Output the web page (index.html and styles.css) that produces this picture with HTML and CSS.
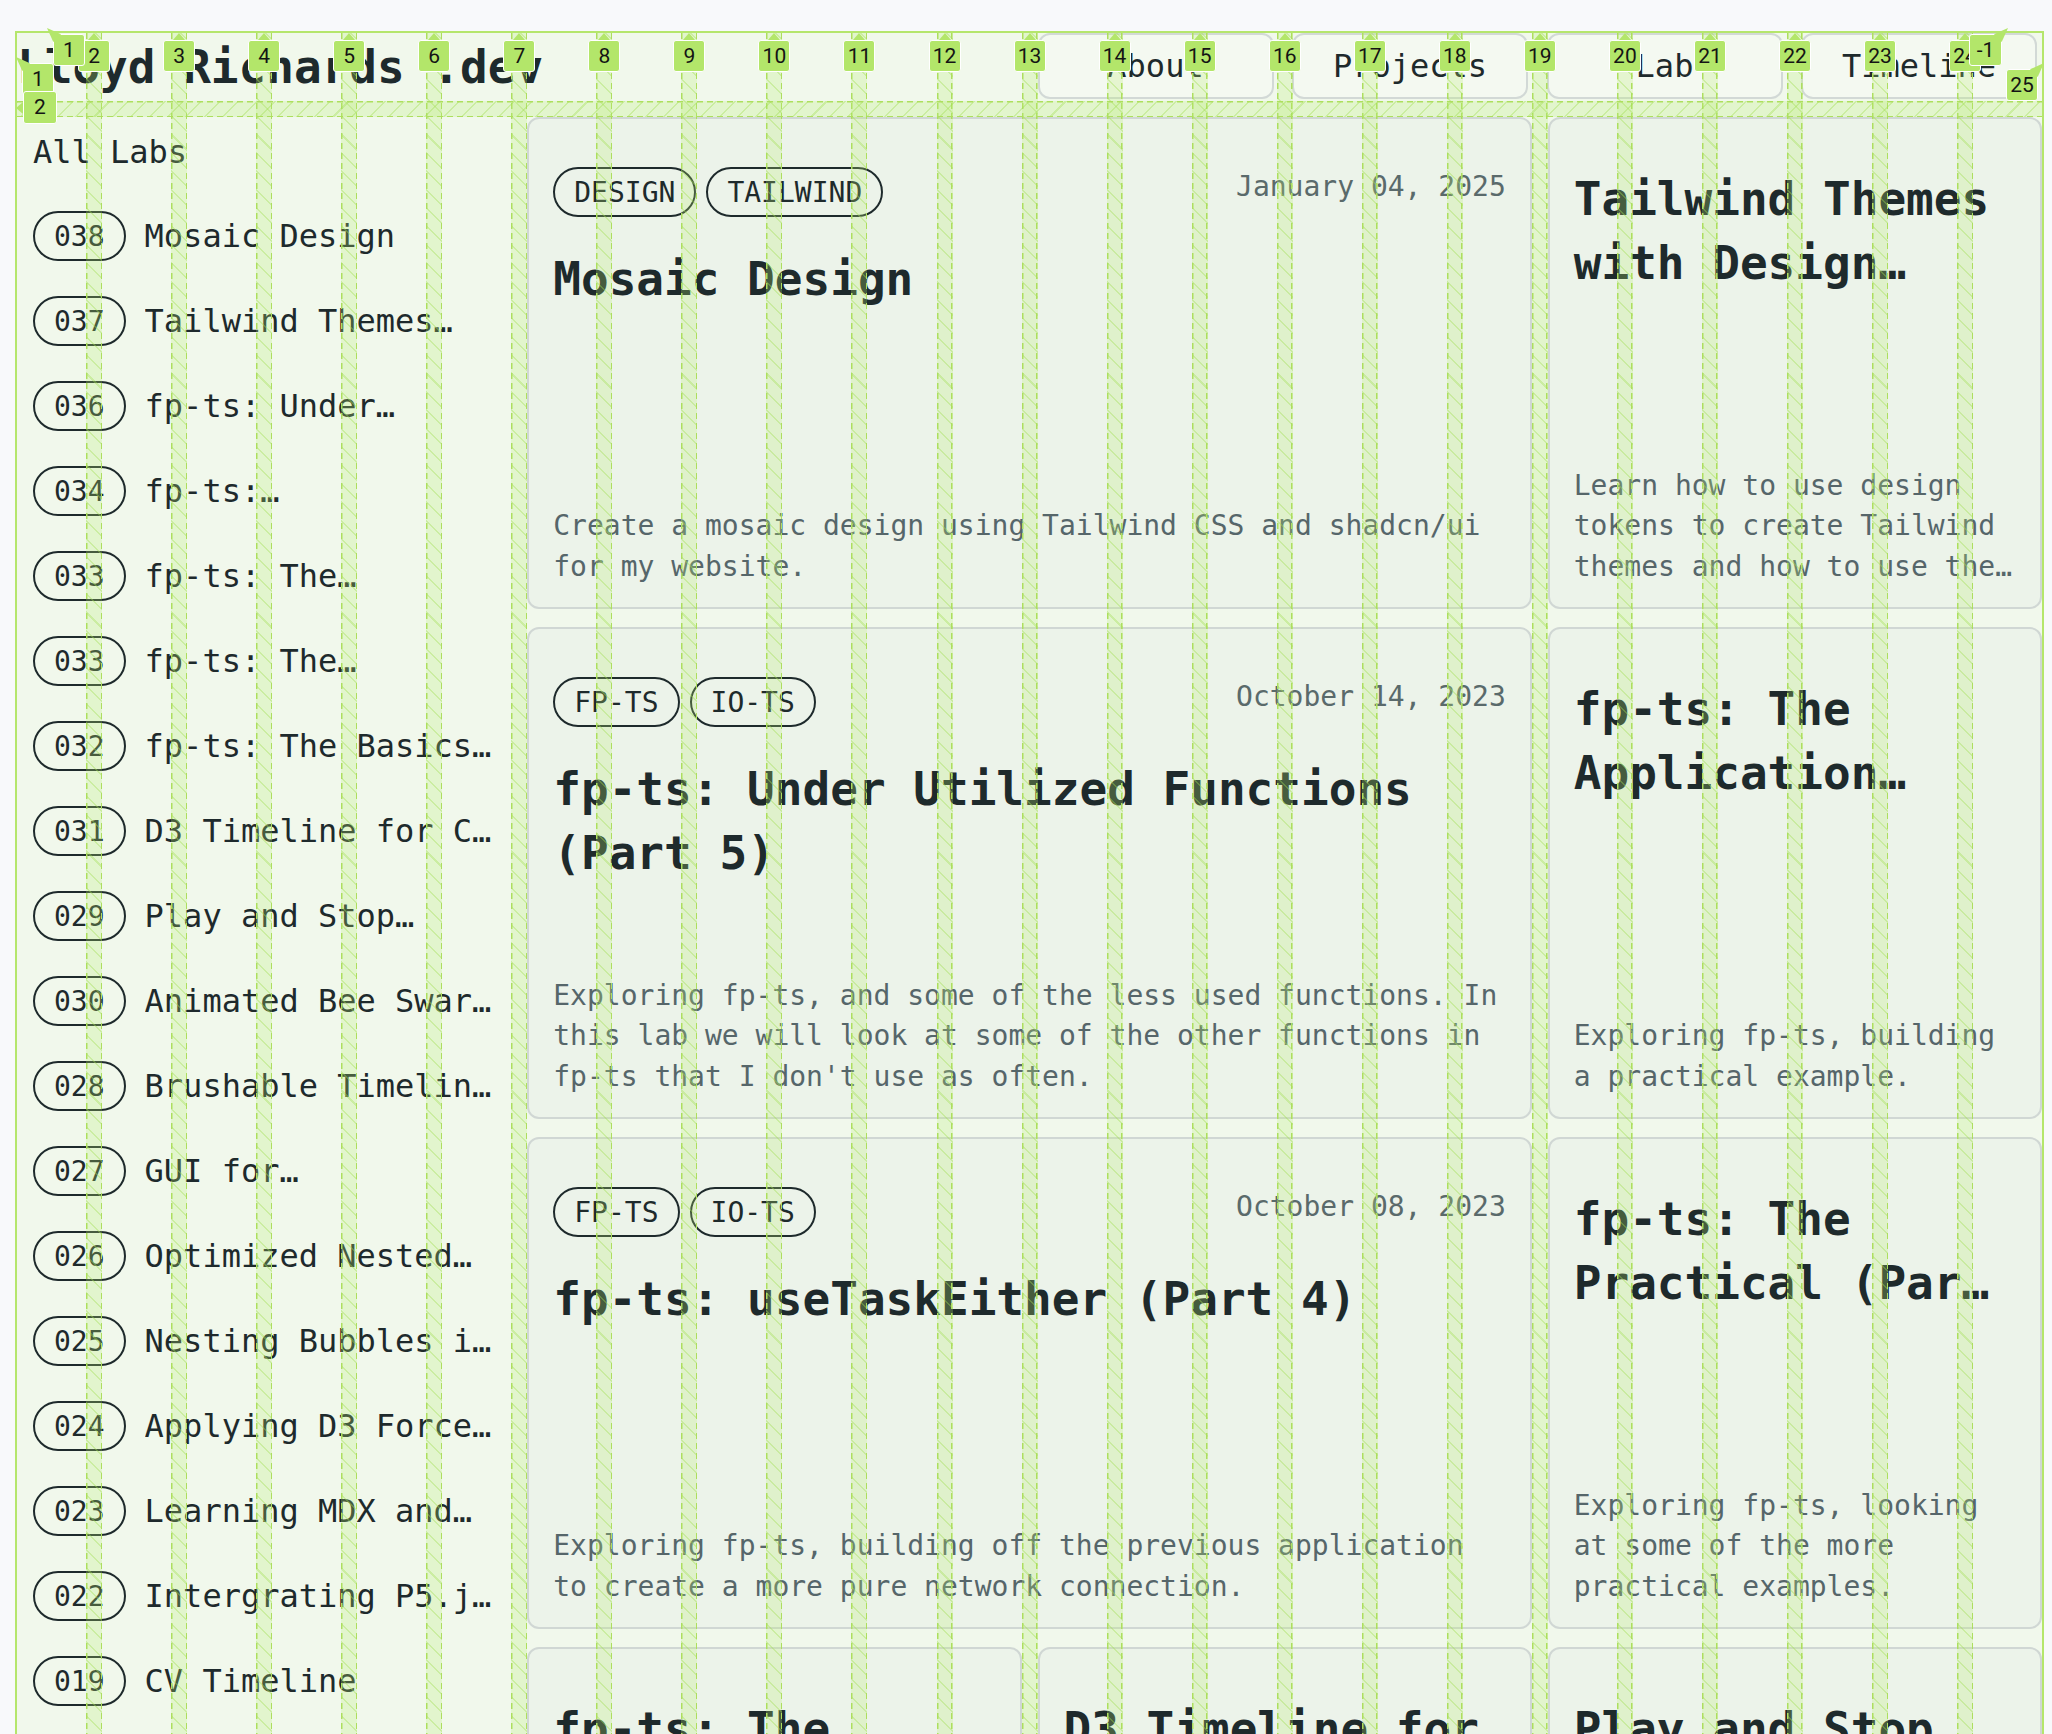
FILE: index.html
```html
<!DOCTYPE html>
<html lang="en">
<head>
<meta charset="utf-8">
<title>Lloyd Richards .dev — Lab</title>
<link rel="stylesheet" href="styles.css">
</head>
<body>
<div class="page">
  <div class="layout">
    <header class="site-header">
      <a class="brand" href="#">Lloyd Richards .dev</a>
      <nav class="nav">
        <a class="nav-link" href="#">About</a>
        <a class="nav-link" href="#">Projects</a>
        <a class="nav-link" href="#">Lab</a>
        <a class="nav-link" href="#">Timeline</a>
      </nav>
    </header>

    <aside class="sidebar">
      <h2 class="sidebar-title">All Labs</h2>
      <ul class="lab-list">
        <li class="lab-item"><span class="pill">038</span><span class="lab-name">Mosaic Design</span></li>
        <li class="lab-item"><span class="pill">037</span><span class="lab-name">Tailwind Themes…</span></li>
        <li class="lab-item"><span class="pill">036</span><span class="lab-name">fp-ts: Under…</span></li>
        <li class="lab-item"><span class="pill">034</span><span class="lab-name">fp-ts:…</span></li>
        <li class="lab-item"><span class="pill">033</span><span class="lab-name">fp-ts: The…</span></li>
        <li class="lab-item"><span class="pill">033</span><span class="lab-name">fp-ts: The…</span></li>
        <li class="lab-item"><span class="pill">032</span><span class="lab-name">fp-ts: The Basics…</span></li>
        <li class="lab-item"><span class="pill">031</span><span class="lab-name">D3 Timeline for C…</span></li>
        <li class="lab-item"><span class="pill">029</span><span class="lab-name">Play and Stop…</span></li>
        <li class="lab-item"><span class="pill">030</span><span class="lab-name">Animated Bee Swar…</span></li>
        <li class="lab-item"><span class="pill">028</span><span class="lab-name">Brushable Timelin…</span></li>
        <li class="lab-item"><span class="pill">027</span><span class="lab-name">GUI for…</span></li>
        <li class="lab-item"><span class="pill">026</span><span class="lab-name">Optimized Nested…</span></li>
        <li class="lab-item"><span class="pill">025</span><span class="lab-name">Nesting Bubbles i…</span></li>
        <li class="lab-item"><span class="pill">024</span><span class="lab-name">Applying D3 Force…</span></li>
        <li class="lab-item"><span class="pill">023</span><span class="lab-name">Learning MDX and…</span></li>
        <li class="lab-item"><span class="pill">022</span><span class="lab-name">Intergrating P5.j…</span></li>
        <li class="lab-item"><span class="pill">019</span><span class="lab-name">CV Timeline</span></li>
      </ul>
    </aside>

    <main class="cards">
      <article class="card card-wide">
        <div class="card-meta">
          <div class="tags"><span class="pill">DESIGN</span><span class="pill">TAILWIND</span></div>
          <span class="date">January 04, 2025</span>
        </div>
        <h3 class="card-title">Mosaic Design</h3>
        <p class="card-desc">Create a mosaic design using Tailwind CSS and shadcn/ui for my website.</p>
      </article>
      <article class="card">
        <h3 class="card-title">Tailwind Themes with Design…</h3>
        <p class="card-desc">Learn how to use design tokens to create Tailwind themes and how to use the…</p>
      </article>

      <article class="card card-wide">
        <div class="card-meta">
          <div class="tags"><span class="pill">FP-TS</span><span class="pill">IO-TS</span></div>
          <span class="date">October 14, 2023</span>
        </div>
        <h3 class="card-title">fp-ts: Under Utilized Functions (Part 5)</h3>
        <p class="card-desc">Exploring fp-ts, and some of the less used functions. In this lab we will look at some of the other functions in fp-ts that I don't use as often.</p>
      </article>
      <article class="card">
        <h3 class="card-title">fp-ts: The Application…</h3>
        <p class="card-desc">Exploring fp-ts, building a practical example.</p>
      </article>

      <article class="card card-wide">
        <div class="card-meta">
          <div class="tags"><span class="pill">FP-TS</span><span class="pill">IO-TS</span></div>
          <span class="date">October 08, 2023</span>
        </div>
        <h3 class="card-title">fp-ts: useTaskEither (Part 4)</h3>
        <p class="card-desc">Exploring fp-ts, building off the previous application to create a more pure network connection.</p>
      </article>
      <article class="card">
        <h3 class="card-title">fp-ts: The Practical (Par…</h3>
        <p class="card-desc">Exploring fp-ts, looking at some of the more practical examples.</p>
      </article>

      <article class="card">
        <h3 class="card-title">fp-ts: The Basics…</h3>
        <p class="card-desc">Exploring fp-ts, starting with the basics.</p>
      </article>
      <article class="card">
        <h3 class="card-title">D3 Timeline for Canvas</h3>
        <p class="card-desc">Building a timeline with D3 and canvas.</p>
      </article>
      <article class="card">
        <h3 class="card-title">Play and Stop Animations</h3>
        <p class="card-desc">Controlling animations with play and stop.</p>
      </article>
    </main>

    <div class="grid-overlay" aria-hidden="true">
      <div class="ov-track"></div>
      <div class="ov-gap"><span class="gl gl-up">2</span></div>
      <div class="ov-track"></div>
      <div class="ov-gap"><span class="gl gl-up">3</span></div>
      <div class="ov-track"></div>
      <div class="ov-gap"><span class="gl gl-up">4</span></div>
      <div class="ov-track"></div>
      <div class="ov-gap"><span class="gl gl-up">5</span></div>
      <div class="ov-track"></div>
      <div class="ov-gap"><span class="gl gl-up">6</span></div>
      <div class="ov-track"></div>
      <div class="ov-gap"><span class="gl gl-up">7</span></div>
      <div class="ov-track"></div>
      <div class="ov-gap"><span class="gl gl-up">8</span></div>
      <div class="ov-track"></div>
      <div class="ov-gap"><span class="gl gl-up">9</span></div>
      <div class="ov-track"></div>
      <div class="ov-gap"><span class="gl gl-up">10</span></div>
      <div class="ov-track"></div>
      <div class="ov-gap"><span class="gl gl-up">11</span></div>
      <div class="ov-track"></div>
      <div class="ov-gap"><span class="gl gl-up">12</span></div>
      <div class="ov-track"></div>
      <div class="ov-gap"><span class="gl gl-up">13</span></div>
      <div class="ov-track"></div>
      <div class="ov-gap"><span class="gl gl-up">14</span></div>
      <div class="ov-track"></div>
      <div class="ov-gap"><span class="gl gl-up">15</span></div>
      <div class="ov-track"></div>
      <div class="ov-gap"><span class="gl gl-up">16</span></div>
      <div class="ov-track"></div>
      <div class="ov-gap"><span class="gl gl-up">17</span></div>
      <div class="ov-track"></div>
      <div class="ov-gap"><span class="gl gl-up">18</span></div>
      <div class="ov-track"></div>
      <div class="ov-gap"><span class="gl gl-up">19</span></div>
      <div class="ov-track"></div>
      <div class="ov-gap"><span class="gl gl-up">20</span></div>
      <div class="ov-track"></div>
      <div class="ov-gap"><span class="gl gl-up">21</span></div>
      <div class="ov-track"></div>
      <div class="ov-gap"><span class="gl gl-up">22</span></div>
      <div class="ov-track"></div>
      <div class="ov-gap"><span class="gl gl-up">23</span></div>
      <div class="ov-track"></div>
      <div class="ov-gap"><span class="gl gl-up">24</span></div>
      <div class="ov-track"></div>

      <div class="ov-row-gap"></div>

      <span class="gl gl-tl gl-col1">1</span>
      <span class="gl gl-tl gl-row1">1</span>
      <span class="gl gl-left gl-row2">2</span>
      <span class="gl gl-tr gl-neg">-1</span>
      <span class="gl gl-tr gl-last">25</span>
    </div>
  </div>
</div>
</body>
</html>
```

FILE: styles.css
```css
* {
  box-sizing: border-box;
}

html,
body {
  margin: 0;
}

body {
  background: #f8f9fb;
  color: #1e2a2c;
  font-family: "DejaVu Sans Mono", "Liberation Mono", monospace;
}

.page {
  padding: 33px 10px 0 17px;
}

/* ---------- main 24 column grid ---------- */
.layout {
  position: relative;
  display: grid;
  grid-template-columns: repeat(24, minmax(0, 1fr));
  grid-template-rows: 68px auto;
  gap: 16px;
  background: #f1f8ec;
}

/* ---------- header ---------- */
.site-header {
  grid-column: 1 / -1;
  display: flex;
  align-items: center;
  justify-content: space-between;
  padding-right: 5px;
}

.brand {
  font-size: 46px;
  font-weight: 700;
  line-height: 64px;
  color: #1e2a2c;
  text-decoration: none;
  white-space: nowrap;
}

.nav {
  display: flex;
  gap: 18.5px;
  align-self: flex-start;
}

.nav-link {
  width: 236px;
  height: 66px;
  display: flex;
  align-items: center;
  justify-content: center;
  border: 2px solid #d2d9d6;
  border-radius: 12px;
  background: #f4f9f1;
  color: #1e2a2c;
  font-size: 32px;
  text-decoration: none;
}

/* ---------- sidebar ---------- */
.sidebar {
  grid-column: 1 / 7;
  grid-row: 2;
  padding: 11px 16px 0;
  min-width: 0;
}

.sidebar-title {
  margin: 0;
  font-size: 32px;
  font-weight: 400;
  line-height: 48px;
}

.lab-list {
  list-style: none;
  margin: 35px 0 0;
  padding: 0;
  display: flex;
  flex-direction: column;
  gap: 35px;
}

.lab-item {
  display: flex;
  align-items: center;
  gap: 19px;
  height: 50px;
}

.pill {
  display: inline-flex;
  align-items: center;
  flex: none;
  height: 50px;
  padding: 0 19px;
  border: 2px solid #1e2a2c;
  border-radius: 999px;
  font-size: 28px;
  white-space: nowrap;
}

.lab-name {
  font-size: 32px;
  white-space: nowrap;
  overflow: hidden;
}

/* ---------- cards ---------- */
.cards {
  grid-column: 7 / -1;
  grid-row: 2;
  display: grid;
  grid-template-columns: repeat(18, minmax(0, 1fr));
  grid-auto-rows: 492px;
  column-gap: 16px;
  row-gap: 18px;
  min-width: 0;
}

.card {
  grid-column: span 6;
  display: flex;
  flex-direction: column;
  min-width: 0;
  padding: 48px 24px 20px;
  border: 2px solid #d0d7d4;
  border-radius: 12px;
  background: #ecf3ea;
  overflow: hidden;
}

.card-wide {
  grid-column: span 12;
}

.card-meta {
  display: flex;
  align-items: flex-start;
  justify-content: space-between;
  margin-bottom: 30px;
}

.tags {
  display: flex;
  gap: 10px;
}

.date {
  font-size: 28px;
  line-height: 40px;
  color: #5a6a6b;
  white-space: nowrap;
}

.card-title {
  margin: 0;
  font-size: 46px;
  font-weight: 700;
  line-height: 64px;
}

.card-desc {
  margin: auto 0 0;
  font-size: 28px;
  line-height: 40.5px;
  color: #56666a;
}

/* ---------- devtools grid overlay ---------- */
.grid-overlay {
  position: absolute;
  inset: 0;
  z-index: 5;
  display: flex;
  pointer-events: none;
  outline: 2px solid #b5e66c;
}

.ov-track {
  flex: 1 1 0;
  min-width: 0;
}

.ov-gap {
  position: relative;
  flex: 0 0 16px;
  background:
    repeating-linear-gradient(to bottom, #addf5e 0 6px, transparent 6px 10px) left top / 1.5px 100% no-repeat,
    repeating-linear-gradient(to bottom, #addf5e 0 6px, transparent 6px 10px) right top / 1.5px 100% no-repeat,
    repeating-linear-gradient(45deg, rgba(160, 222, 80, 0.35) 0 1.5px, transparent 1.5px 13px),
    rgba(184, 234, 116, 0.26);
}

.ov-row-gap {
  position: absolute;
  left: 0;
  right: 0;
  top: 68px;
  height: 16px;
  background:
    repeating-linear-gradient(to right, #addf5e 0 6px, transparent 6px 10px) left top / 100% 1.5px no-repeat,
    repeating-linear-gradient(to right, #addf5e 0 6px, transparent 6px 10px) left bottom / 100% 1.5px no-repeat,
    repeating-linear-gradient(135deg, rgba(160, 222, 80, 0.35) 0 1.5px, transparent 1.5px 13px),
    rgba(184, 234, 116, 0.26);
}

.gl {
  position: absolute;
  z-index: 2;
  width: 32px;
  height: 32px;
  display: flex;
  align-items: center;
  justify-content: center;
  background: #b3e66a;
  border: 1px solid #ffffff;
  border-radius: 3px;
  color: #141414;
  font: 21px/1 Roboto, "Noto Sans", sans-serif;
}

.ov-gap .gl {
  top: 7px;
  left: 50%;
  margin-left: -16px;
}

.gl::after {
  content: "";
  position: absolute;
}

.gl-up::after {
  top: -8px;
  left: 50%;
  margin-left: -6px;
  border-left: 6px solid transparent;
  border-right: 6px solid transparent;
  border-bottom: 7px solid #b3e66a;
}

.gl-left::after {
  left: -8px;
  top: 50%;
  margin-top: -6px;
  border-top: 6px solid transparent;
  border-bottom: 6px solid transparent;
  border-right: 7px solid #b3e66a;
}

.gl-tl::after {
  top: -7px;
  left: -7px;
  width: 14px;
  height: 14px;
  background: #b3e66a;
  clip-path: polygon(0 0, 100% 45%, 45% 100%);
}

.gl-tr::after {
  top: -7px;
  right: -7px;
  width: 14px;
  height: 14px;
  background: #b3e66a;
  clip-path: polygon(100% 0, 55% 100%, 0 45%);
}

.gl-col1 {
  z-index: 3;
  left: 36px;
  top: 1px;
}

.gl-row1 {
  z-index: 3;
  left: 5px;
  top: 30px;
}

.gl-row2 {
  z-index: 4;
  left: 6px;
  top: 58px;
  width: 34px;
  height: 33px;
}

.gl-neg {
  z-index: 3;
  right: 40px;
  top: 1px;
  width: 33px;
}

.gl-last {
  z-index: 3;
  right: 4px;
  top: 36px;
}
```
